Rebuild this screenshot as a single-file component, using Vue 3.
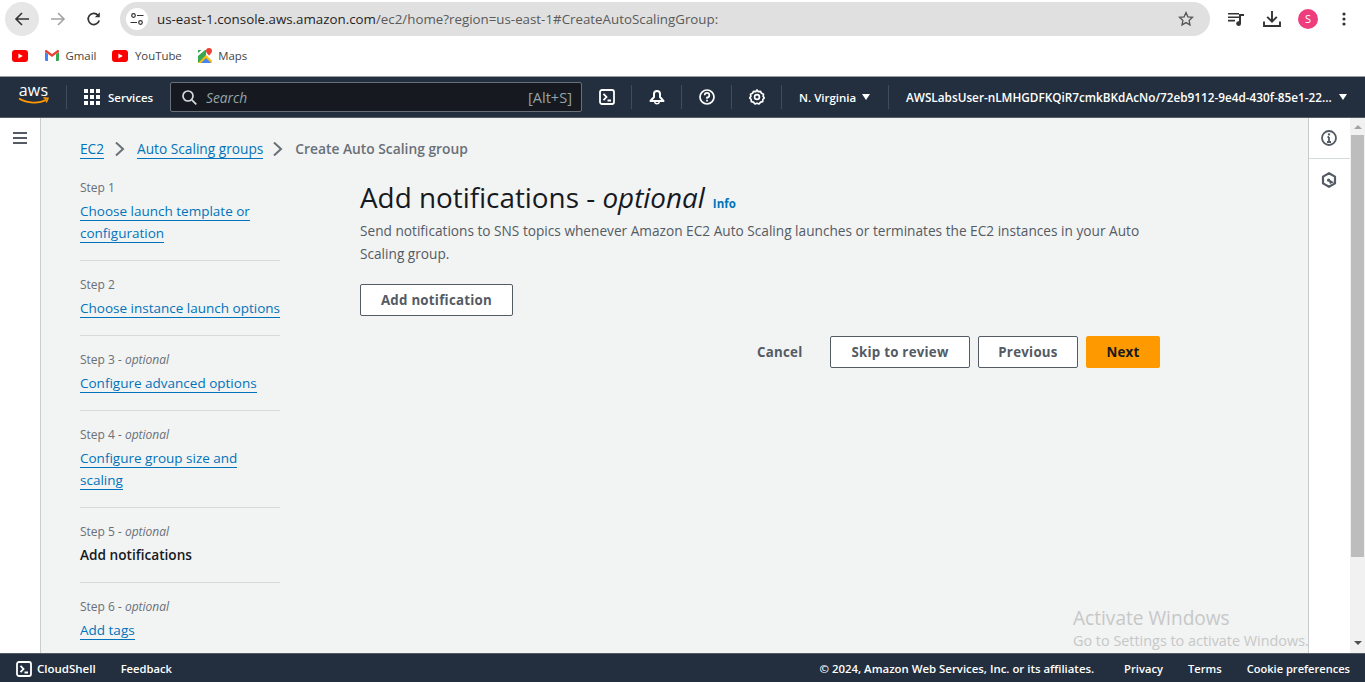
<script setup>
const bookmarks = [
  { name: '', icon: 'yt' },
  { name: 'Gmail', icon: 'gmail' },
  { name: 'YouTube', icon: 'yt' },
  { name: 'Maps', icon: 'maps' },
]

const steps = [
  { label: 'Step 1', links: ['Choose launch template or', 'configuration'] },
  { label: 'Step 2', links: ['Choose instance launch options'] },
  { label: 'Step 3', optional: true, links: ['Configure advanced options'] },
  { label: 'Step 4', optional: true, links: ['Configure group size and', 'scaling'] },
  { label: 'Step 5', optional: true, current: 'Add notifications', links: [] },
  { label: 'Step 6', optional: true, links: ['Add tags'] },
]
</script>

<template>
  <div class="page">
    <div class="toolbar">
      <div class="round-btn">
        <svg width="16" height="16" viewBox="0 0 16 16" fill="none" stroke="#333" stroke-width="1.6"><path d="M15 8H2M8 2L2 8l6 6" /></svg>
      </div>
      <div class="tool-btn forward">
        <svg width="16" height="16" viewBox="0 0 16 16" fill="none" stroke="#a3a3a3" stroke-width="1.6"><path d="M1 8h13M8 2l6 6-6 6" /></svg>
      </div>
      <div class="tool-btn reload">
        <svg width="16" height="16" viewBox="0 0 16 16" fill="none" stroke="#333" stroke-width="1.7"><path d="M13.2 9.5A5.6 5.6 0 1 1 12 4.2" /><path d="M13.8 1.2v5h-5z" fill="#333" stroke="none" /></svg>
      </div>
      <div class="omnibox">
        <div class="site-icon">
          <svg width="14" height="14" viewBox="0 0 14 14" fill="none" stroke="#333" stroke-width="1.2"><circle cx="3.5" cy="3.5" r="1.8" /><path d="M7 3.5h6.5M.5 10.5H7" /><circle cx="10.5" cy="10.5" r="1.8" /></svg>
        </div>
        <div class="url"><span>us-east-1.console.aws.amazon.com</span><span class="url-rest">/ec2/home?region=us-east-1#CreateAutoScalingGroup:</span></div>
        <svg class="star" width="16" height="16" viewBox="0 0 16 16" fill="none" stroke="#555" stroke-width="1.3"><path d="M8 1.6l1.9 4.2 4.6.5-3.4 3.1.9 4.5L8 11.6l-4 2.3.9-4.5L1.5 6.3l4.6-.5z" /></svg>
      </div>
      <div class="tool-right">
        <svg width="16" height="14" viewBox="0 0 16 14" fill="#333"><path d="M0 1h11v1.6H0zM0 4.4h11V6H0zM0 7.8h7v1.6H0z" /><path d="M11 2h5v2h-3v7.5a2.4 2.4 0 1 1-2-2.3z" /></svg>
        <svg width="18" height="16" viewBox="0 0 18 16" fill="none" stroke="#333" stroke-width="1.9"><path d="M9 0v10M4.2 5.800L9 10.600l4.800-4.800M1 10.500V15h16v-4.500" /></svg>
        <div class="avatar">S</div>
        <svg width="4" height="14" viewBox="0 0 4 14" fill="#333"><circle cx="2" cy="2" r="1.6" /><circle cx="2" cy="7" r="1.6" /><circle cx="2" cy="12" r="1.6" /></svg>
      </div>
    </div>

    <div class="bookmarks">
      <div v-for="(b, i) in bookmarks" :key="i" class="bookmark" :class="{ bare: !b.name }">
        <svg v-if="b.icon === 'yt'" width="16" height="12" viewBox="0 0 16 12"><rect width="16" height="12" rx="3" fill="#f00" /><path d="M6.400 3.400L10.800 6 6.400 8.600z" fill="#fff" /></svg>
        <svg v-else-if="b.icon === 'gmail'" width="14" height="11" viewBox="0 0 14 11"><path d="M0 2v8a1 1 0 0 0 1 1h2V4z" fill="#4285f4" /><path d="M14 2v8a1 1 0 0 1-1 1h-2V4z" fill="#34a853" /><path d="M0 2l3 2 4 3 4-3 3-2V1.500C14 .2 12.700-.3 11.800.400L7 4 2.200.4C1.300-.3 0 .2 0 1.500z" fill="#ea4335" /></svg>
        <svg v-else width="14" height="15" viewBox="0 0 14 15"><path d="M0 2h8v13H1a1 1 0 0 1-1-1z" fill="#34a853" /><path d="M0 15L8 7l6 6v1a1 1 0 0 1-1 1z" fill="#fbbc04" /><path d="M3 15l5-5 5 5z" fill="#4285f4" /><path d="M0 8l7-6H3.500L0 5z" fill="#fff" /><path d="M11 0a3 3 0 0 1 3 3c0 2-3 4.500-3 4.500S8 5 8 3a3 3 0 0 1 3-3z" fill="#ea4335" /></svg>
        <span v-if="b.name">{{ b.name }}</span>
      </div>
    </div>

    <nav class="topnav">
      <div class="aws-logo">
        <span>aws</span>
        <svg width="31" height="8" viewBox="0 0 31 8" fill="none"><path d="M1 1.500c8 5 20 5.500 27.500 1" stroke="#ff9900" stroke-width="1.800" /><path d="M25.500 .8l4.500 .6-1.800 4" stroke="#ff9900" stroke-width="1.500" /></svg>
      </div>
      <i class="sep first"></i>
      <svg class="grid-icon" width="16" height="16" viewBox="0 0 16 16" fill="#fff"><rect v-for="n in 9" :key="n" :x="((n - 1) % 3) * 6" :y="Math.floor((n - 1) / 3) * 6" width="4" height="4" /></svg>
      <span class="services">Services</span>
      <div class="search">
        <svg width="15" height="15" viewBox="0 0 15 15" fill="none" stroke="#d5dbdb" stroke-width="1.700"><circle cx="6" cy="6" r="5" /><path d="M9.800 9.800L14.300 14.300" /></svg>
        <span class="search-text">Search</span>
        <span class="search-key">[Alt+S]</span>
      </div>
      <div class="nav-icon">
        <svg width="16" height="16" viewBox="0 0 16 16" fill="none" stroke="#fff" stroke-width="1.800"><rect x="1" y="1" width="14" height="14" rx="2" /><path d="M4.500 4.800L7.500 8l-3 3.200M8.500 11.500h3.500" /></svg>
      </div>
      <i class="sep"></i>
      <div class="nav-icon">
        <svg width="16" height="17" viewBox="0 0 16 17" fill="none" stroke="#fff" stroke-width="2"><path d="M1.500 12L5 8V5a3 3 0 0 1 6 0v3l3.500 4z" stroke-linejoin="round" /><path d="M5.600 13a2.500 2.500 0 0 0 4.800 0" stroke-width="1.500" /></svg>
      </div>
      <i class="sep"></i>
      <div class="nav-icon">
        <svg width="16" height="16" viewBox="0 0 16 16" fill="none" stroke="#fff" stroke-width="1.700"><circle cx="8" cy="8" r="7" /><path d="M5.700 6.200A2.300 2.300 0 1 1 8 8.500v1.300" /><path d="M8 10.800v1.700" /></svg>
      </div>
      <i class="sep"></i>
      <div class="nav-icon">
        <svg width="16" height="16" viewBox="0 0 16 16" fill="none" stroke="#fff" stroke-width="1.700"><path d="M8 1l1.300 1.700 2.200-.3 1 1.900 2 .9-.4 2.100L15.300 9l-1.500 1.500-.1 2.200-2.100.4L10 15l-2-.8L6 15l-1.600-1.900-2.100-.4-.1-2.200L.700 9l1.200-1.700-.4-2.100 2-.9 1-1.900 2.200.3z" stroke-linejoin="round" /><circle cx="8" cy="8" r="2.400" /></svg>
      </div>
      <i class="sep"></i>
      <span class="region">N. Virginia</span>
      <i class="caret region-caret"></i>
      <i class="sep"></i>
      <span class="account">AWSLabsUser-nLMHGDFKQiR7cmkBKdAcNo/72eb9112-9e4d-430f-85e1-22...</span>
      <i class="caret"></i>
    </nav>

    <div class="body">
      <aside class="left-rail">
        <svg width="14" height="12" viewBox="0 0 14 12" fill="#545b64"><path d="M0 0h14v2H0zM0 5h14v2H0zM0 10h14v2H0z" /></svg>
      </aside>

      <div class="content">
        <div class="breadcrumbs">
          <a class="link">EC2</a>
          <svg class="chev-a" width="10" height="14" viewBox="0 0 10 14" fill="none" stroke="#687078" stroke-width="2"><path d="M1 .5L8 7l-7 6.500" /></svg>
          <a class="link">Auto Scaling groups</a>
          <svg class="chev-b" width="10" height="14" viewBox="0 0 10 14" fill="none" stroke="#687078" stroke-width="2"><path d="M1 .5L8 7l-7 6.500" /></svg>
          <span class="crumb-current">Create Auto Scaling group</span>
        </div>

        <div class="wizard">
          <ol class="steps">
            <li v-for="s in steps" :key="s.label" class="step">
              <div class="step-label">{{ s.label }}<em v-if="s.optional"> - optional</em></div>
              <div v-if="s.current" class="step-current">{{ s.current }}</div>
              <div v-for="l in s.links" :key="l" class="step-link"><a class="link">{{ l }}</a></div>
            </li>
          </ol>

          <main class="main">
            <div class="title-row">
              <h1>Add notifications - <em>optional</em></h1>
              <a class="info">Info</a>
            </div>
            <p class="desc">Send notifications to SNS topics whenever Amazon EC2 Auto Scaling launches or terminates the EC2 instances in your Auto Scaling group.</p>
            <button class="btn add">Add notification</button>
            <div class="actions">
              <button class="btn plain">Cancel</button>
              <button class="btn skip">Skip to review</button>
              <button class="btn prev">Previous</button>
              <button class="btn primary">Next</button>
            </div>
          </main>
        </div>

        <div class="watermark">
          <div class="wm-title">Activate Windows</div>
          <div class="wm-sub">Go to Settings to activate Windows.</div>
        </div>
      </div>

      <aside class="right-rail">
        <div class="rail-btn">
          <svg width="16" height="16" viewBox="0 0 16 16" fill="none" stroke="#545b64" stroke-width="1.800"><circle cx="8" cy="8" r="7" /><path d="M8 7v5M6 12h4M6.500 7H8" /><path d="M8 3.400v2" stroke-width="2.200" /></svg>
        </div>
        <div class="rail-btn second">
          <svg width="16" height="16" viewBox="0 0 16 16" fill="none" stroke="#545b64" stroke-width="2.200"><path d="M8 1.200l6 3.400v6.800l-6 3.400-6-3.400V4.600z" stroke-linejoin="round" /><path d="M6.800 6.800L13 10.200 9 12z" fill="#545b64" stroke="none" /><circle cx="7.600" cy="8.200" r="1.600" fill="#545b64" stroke="none" /></svg>
        </div>
      </aside>

      <div class="scrollbar">
        <i class="arrow up"></i>
        <div class="thumb"></div>
        <i class="arrow down"></i>
      </div>
    </div>

    <footer class="footer">
      <svg width="16" height="16" viewBox="0 0 16 16" fill="none" stroke="#fff" stroke-width="1.800"><rect x="1" y="1" width="14" height="14" rx="2" /><path d="M4.500 4.800L7.500 8l-3 3.200M8.500 11.500h3.500" /></svg>
      <span class="cloudshell">CloudShell</span>
      <span class="feedback">Feedback</span>
      <span class="copyright">© 2024, Amazon Web Services, Inc. or its affiliates.</span>
      <span class="privacy">Privacy</span>
      <span class="terms">Terms</span>
      <span class="cookies">Cookie preferences</span>
    </footer>
  </div>
</template>

<style scoped>
.page {
  height: 682px;
  display: flex;
  flex-direction: column;
  overflow: hidden;
  font-family: "Open Sans", "Noto Sans", sans-serif;
  background: #fff;
}
.toolbar {
  height: 37px;
  flex: none;
  display: flex;
  align-items: center;
  padding-left: 5px;
  box-sizing: border-box;
}
.round-btn {
  width: 34px;
  height: 34px;
  border-radius: 50%;
  background: #e6e6e6;
  display: flex;
  align-items: center;
  justify-content: center;
  flex: none;
}
.tool-btn {
  flex: none;
  width: 16px;
  height: 16px;
  display: flex;
}
.forward {
  margin-left: 11px;
}
.reload {
  margin-left: 20px;
}
.omnibox {
  margin-left: 18px;
  width: 1090px;
  height: 34px;
  border-radius: 17px;
  background: #e0e0e0;
  display: flex;
  align-items: center;
  flex: none;
  padding: 0 16px 0 6px;
  box-sizing: border-box;
}
.site-icon {
  width: 22px;
  height: 22px;
  border-radius: 50%;
  background: #fff;
  display: flex;
  align-items: center;
  justify-content: center;
  flex: none;
}
.url {
  margin-left: 9px;
  font-size: 13.33px;
  color: #1f1f1f;
  flex: 1;
  white-space: nowrap;
}
.url-rest {
  color: #5a5a5a;
}
.tool-right {
  display: flex;
  align-items: center;
  margin-left: 18px;
}
.tool-right svg:nth-child(1) {
  margin-right: 19px;
}
.tool-right svg:nth-child(2) {
  margin-right: 17px;
}
.avatar {
  width: 20px;
  height: 20px;
  border-radius: 50%;
  background: #ee3d7c;
  color: #fff;
  font-size: 11px;
  display: flex;
  align-items: center;
  justify-content: center;
  margin-right: 24px;
}
.bookmarks {
  height: 39px;
  flex: none;
  display: flex;
  align-items: center;
  padding: 0 0 2px 12px;
  box-sizing: border-box;
  font-size: 11.4px;
  color: #444;
}
.bookmark {
  display: flex;
  align-items: center;
  gap: 6.5px;
  margin-right: 16px;
}
.bookmark.bare {
  margin-right: 17px;
}
.topnav {
  height: 42px;
  flex: none;
  display: flex;
  align-items: center;
  background: #232f3e;
  border-top: 1px solid #9a9ea3;
  border-bottom: 1px solid #545b64;
  box-sizing: border-box;
  color: #fff;
  font-size: 11.5px;
  font-weight: 600;
}
.aws-logo {
  margin-left: 18px;
  width: 31px;
  height: 30px;
  display: flex;
  flex-direction: column;
  align-items: center;
  flex: none;
  color: #fff;
}
.aws-logo span {
  font-size: 16px;
  line-height: 16px;
  font-weight: 400;
  letter-spacing: .2px;
}
.aws-logo svg {
  margin-top: -1px;
}
.sep {
  width: 1px;
  height: 24px;
  background: #414d5c;
  flex: none;
}
.sep.first {
  margin-left: 17px;
}
.grid-icon {
  margin-left: 17px;
  flex: none;
}
.services {
  margin-left: 8px;
  width: 45px;
  flex: none;
  white-space: nowrap;
}
.search {
  margin-left: 17px;
  width: 412px;
  height: 30px;
  box-sizing: border-box;
  flex: none;
  background: #16191f;
  border: 1px solid #687078;
  border-radius: 2px;
  display: flex;
  align-items: center;
  padding: 0 9px 0 11px;
  font-weight: 400;
  color: #95a5a6;
}
.search-text {
  margin-left: 9px;
  flex: 1;
  font-style: italic;
  font-size: 13.8px;
}
.search-key {
  font-size: 14.6px;
}
.nav-icon {
  width: 49px;
  flex: none;
  height: 17px;
  display: flex;
  align-items: center;
  justify-content: center;
}
.region {
  margin-left: 17px;
  width: 57px;
  flex: none;
  white-space: nowrap;
}
.caret {
  width: 0;
  height: 0;
  flex: none;
  border-left: 4px solid transparent;
  border-right: 4px solid transparent;
  border-top: 6px solid #fff;
  margin-left: 6px;
}
.region-caret {
  margin-right: 18px;
}
.account {
  margin-left: 17px;
  white-space: nowrap;
  flex: none;
  width: 427px;
  font-size: 11.78px;
}
.body {
  flex: 1;
  min-height: 0;
  display: flex;
  background: #f2f3f3;
}
.left-rail {
  width: 41px;
  box-sizing: border-box;
  flex: none;
  background: #fff;
  border-right: 1px solid #c8cccc;
  padding: 14px 0 0 13px;
}
.left-rail svg {
  display: block;
}
.content {
  flex: 1;
  min-width: 0;
  position: relative;
  overflow: hidden;
  padding-left: 39px;
}
.link {
  color: #0073bb;
  text-decoration: none;
  border-bottom: 1px solid #0073bb;
}
.breadcrumbs {
  display: flex;
  align-items: center;
  height: 22px;
  margin-top: 20px;
  font-size: 13.7px;
  line-height: 18px;
}
.breadcrumbs svg {
  flex: none;
}
.chev-a {
  margin: 0 12px 0 11px;
}
.chev-b {
  margin: 0 12px 0 10px;
}
.crumb-current {
  color: #687078;
  font-size: 13.8px;
  font-weight: 600;
}
.wizard {
  display: flex;
  gap: 80px;
  margin-top: 17px;
}
.steps {
  list-style: none;
  width: 200px;
  margin: 0;
  padding: 0;
  flex: none;
  font-size: 13.5px;
}
.step {
  padding: 13px 0 16px;
  border-top: 1px solid #d5dbdb;
}
.step:first-child {
  border-top: 0;
  padding-top: 0;
}
.step-label {
  font-size: 12px;
  line-height: 22px;
  padding-bottom: 1px;
  color: #687078;
}
.step-link {
  line-height: 22px;
  white-space: nowrap;
}
.step-current {
  line-height: 22px;
  font-size: 13.65px;
  font-weight: 600;
  color: #16191f;
}
.main {
  width: 800px;
  flex: none;
  margin-top: 2px;
}
.title-row {
  display: flex;
  align-items: baseline;
  height: 36px;
}
h1 {
  margin: 0;
  font-size: 27.85px;
  line-height: 36px;
  font-weight: 400;
  color: #16191f;
  white-space: nowrap;
}
.info {
  margin-left: 8px;
  font-size: 11.5px;
  font-weight: 700;
  color: #0073bb;
}
.desc {
  margin: 4px 0 0;
  font-size: 13.67px;
  line-height: 23px;
  color: #545b64;
}
.btn {
  display: block;
  box-sizing: border-box;
  height: 32px;
  padding: 0;
  border: 1px solid #545b64;
  border-radius: 2px;
  background: #fff;
  color: #545b64;
  font-family: inherit;
  font-size: 13.3px;
  font-weight: 700;
  letter-spacing: .25px;
}
.add {
  width: 153px;
  margin-top: 19px;
}
.actions {
  display: flex;
  justify-content: flex-end;
  gap: 8px;
  margin-top: 20px;
}
.plain {
  border: 0;
  background: transparent;
  width: 45px;
  margin-right: 20px;
}
.skip {
  width: 140px;
}
.prev {
  width: 100px;
}
.primary {
  width: 74px;
  background: #ff9900;
  border-color: #ff9900;
  color: #16191f;
}
.watermark {
  position: absolute;
  left: 1032px;
  top: 487px;
  white-space: nowrap;
  color: #c6c8c8;
}
.wm-title {
  font-size: 19.1px;
  line-height: 26px;
}
.wm-sub {
  font-size: 14.4px;
  line-height: 20px;
}
.right-rail {
  width: 42px;
  flex: none;
  background: #fff;
  border-left: 1px solid #c8cccc;
  box-sizing: border-box;
}
.rail-btn {
  height: 40px;
  display: flex;
  align-items: center;
  justify-content: center;
  padding-right: 1px;
  border-bottom: 1px solid #d5dbdb;
}
.rail-btn.second {
  border-bottom: 0;
  height: 42px;
}
.scrollbar {
  width: 15px;
  flex: none;
  background: #f1f1f1;
  display: flex;
  flex-direction: column;
  align-items: center;
}
.thumb {
  width: 13px;
  height: 422px;
  background: #bdbdbd;
  margin-top: 6px;
}
.arrow {
  width: 0;
  height: 0;
  border-left: 4px solid transparent;
  border-right: 4px solid transparent;
}
.arrow.up {
  border-bottom: 4px solid #a3a3a3;
  margin-top: 7px;
}
.arrow.down {
  border-top: 4px solid #505050;
  margin-top: 84px;
}
.footer {
  height: 29px;
  flex: none;
  box-sizing: border-box;
  background: #232f3e;
  border-top: 1px solid #545b64;
  color: #fff;
  font-size: 11.2px;
  font-weight: 600;
  display: flex;
  align-items: center;
  padding: 1px 15px 0 16px;
}
.cloudshell {
  margin-left: 5px;
  font-size: 11.5px;
}
.feedback {
  margin-left: 25px;
}
.copyright {
  margin-left: auto;
  font-size: 11.4px;
}
.privacy {
  margin-left: 30px;
}
.terms {
  margin-left: 25px;
}
.cookies {
  margin-left: 25px;
  font-size: 11.1px;
}
</style>

<style>
html, body {
  overflow: hidden;
}
</style>
